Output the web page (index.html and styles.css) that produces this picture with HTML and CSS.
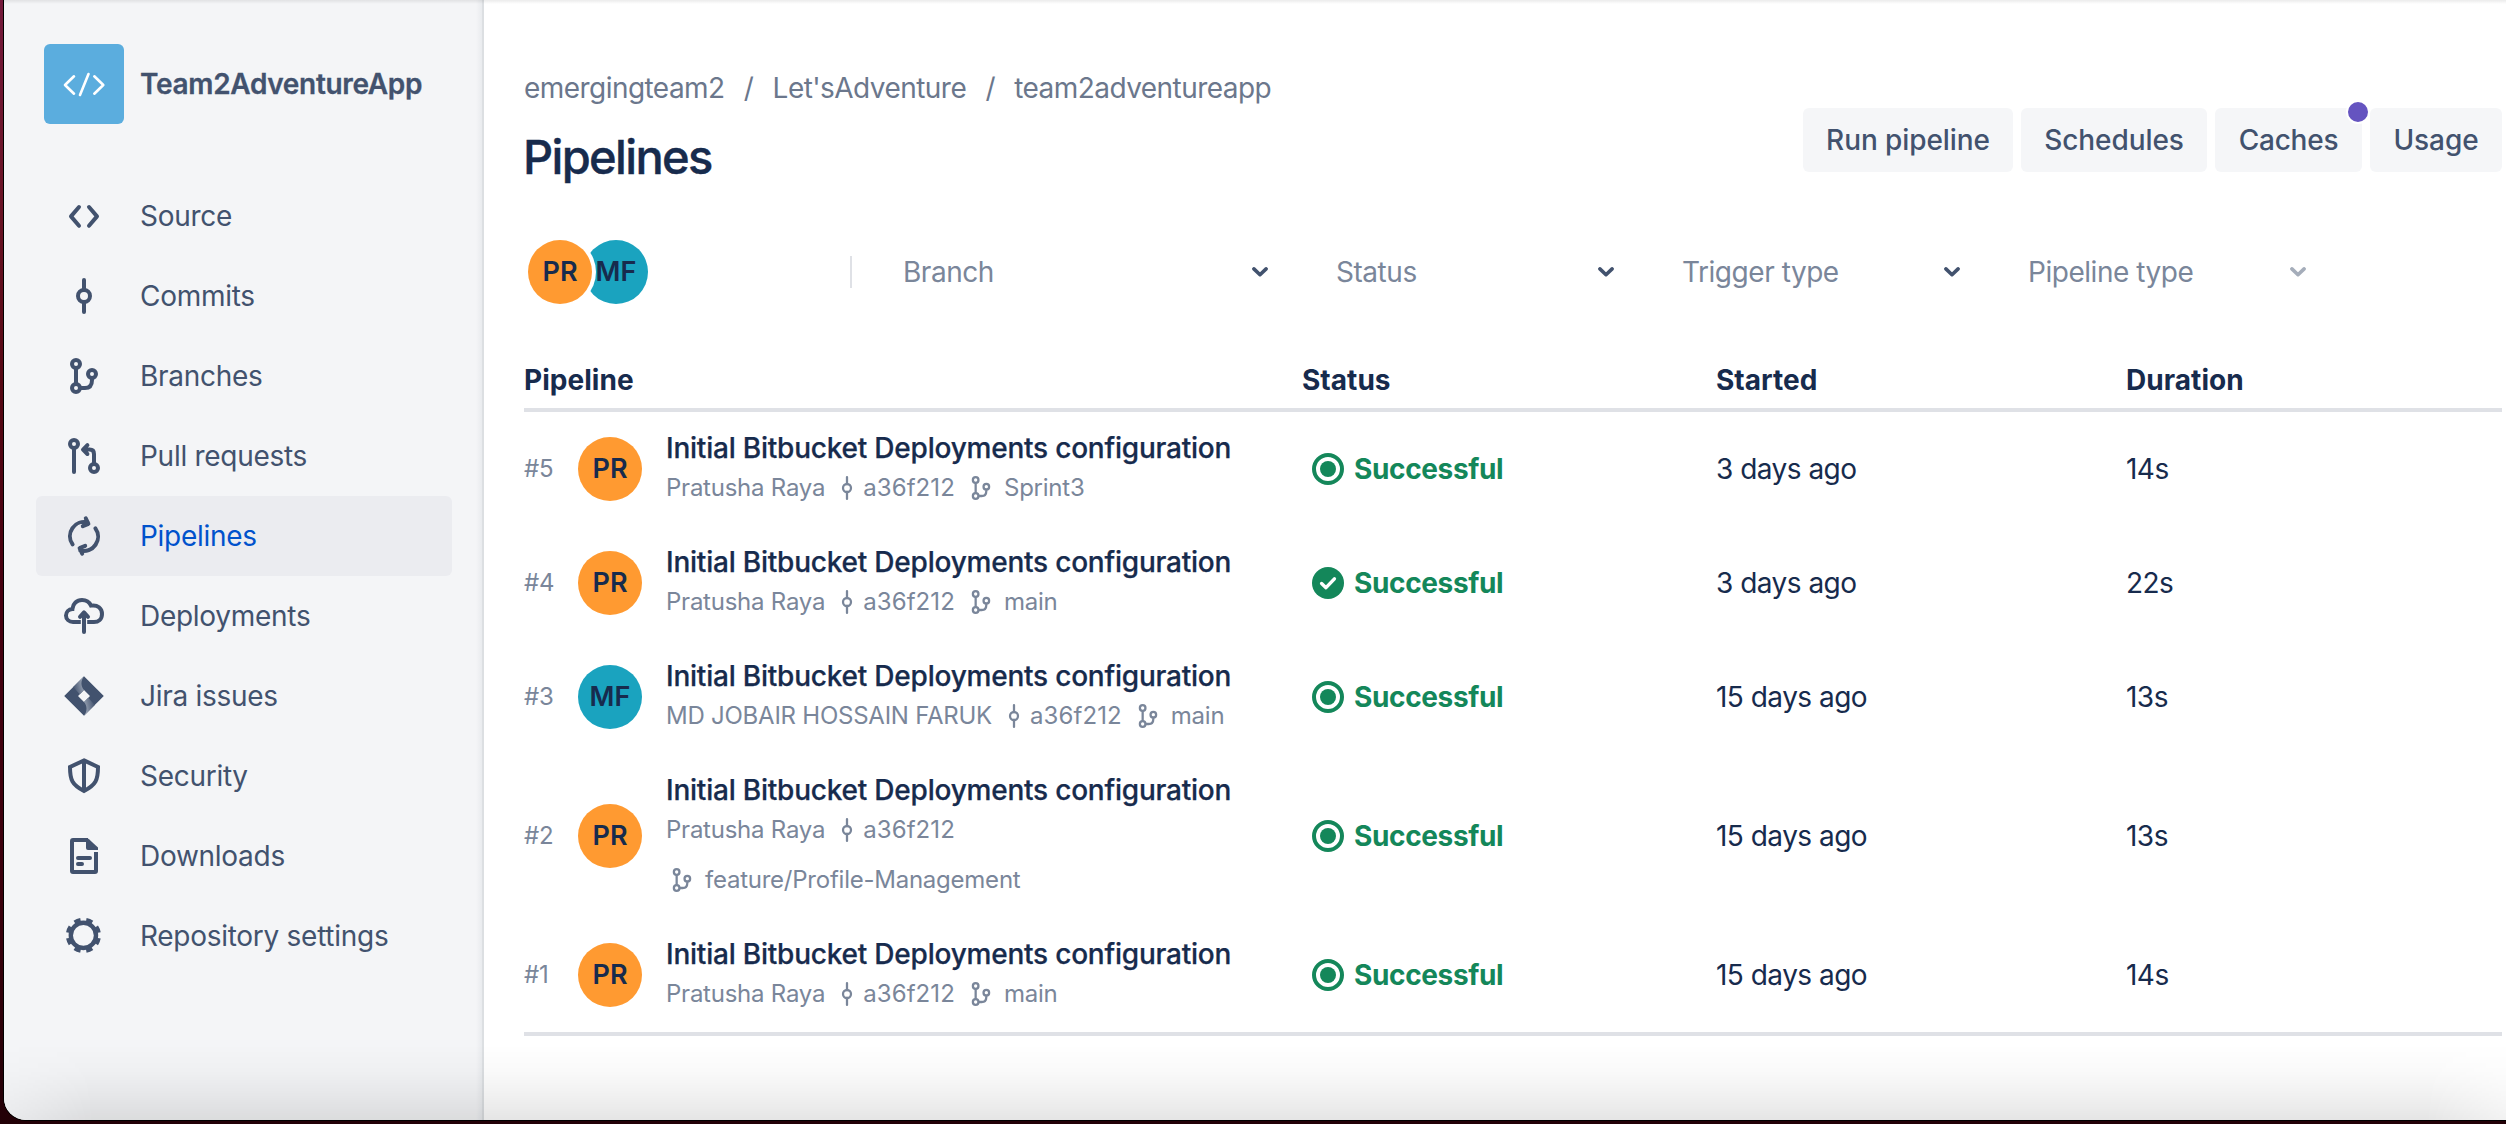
FILE: index.html
```
<!DOCTYPE html>
<html lang="en">
<head>
<meta charset="utf-8">
<title>Pipelines</title>
<link rel="stylesheet" href="styles.css">
</head>
<body>
<svg class="sprite" aria-hidden="true">
  <symbol id="commit" viewBox="0 0 24 24"><g fill="none" stroke="currentColor" stroke-width="2" stroke-linecap="round"><circle cx="12" cy="12" r="3"/><path d="M12 4v4.5M12 15.5V20"/></g></symbol>
  <symbol id="commit-small" viewBox="0 0 24 24"><g fill="none" stroke="currentColor" stroke-width="1.700" stroke-linecap="round"><circle cx="12" cy="12" r="3"/><path d="M12 3.800V9M12 15v5.200"/></g></symbol>
  <symbol id="branch" viewBox="0 0 24 24"><g fill="none" stroke="currentColor" stroke-width="2"><circle cx="8" cy="6" r="2"/><circle cx="8" cy="18" r="2"/><circle cx="16" cy="11" r="2"/><path d="M8 8v8M16 13v1c0 2.6-1.3 4-3.5 4H10"/></g></symbol>
  <symbol id="branch-small" viewBox="0 0 24 24"><g fill="none" stroke="currentColor" stroke-width="1.700"><circle cx="8" cy="6" r="2.100"/><circle cx="8" cy="18" r="2.100"/><circle cx="16" cy="11" r="2.100"/><path d="M8 8v8M16 13v1c0 2.6-1.3 4-3.5 4H10"/></g></symbol>
  <symbol id="chevron" viewBox="0 0 16 10"><path d="M1.900 1.900 8 7.700l6.100-5.800" fill="none" stroke="currentColor" stroke-width="3.600" stroke-linecap="round" stroke-linejoin="round"/></symbol>
  <symbol id="target" viewBox="0 0 32 32"><circle cx="16" cy="16" r="14" fill="none" stroke="currentColor" stroke-width="4"/><circle cx="16" cy="16" r="8" fill="currentColor"/></symbol>
  <symbol id="check" viewBox="0 0 32 32"><circle cx="16" cy="16" r="16" fill="currentColor"/><path d="m9.600 16.500 4.400 4.200 8.400-8.900" fill="none" stroke="#fff" stroke-width="3.400" stroke-linecap="round" stroke-linejoin="round"/></symbol>
</svg>

<div class="window">
  <aside class="sidebar">
    <div class="repo">
      <svg class="repo-logo" viewBox="0 0 80 80"><path d="M30 32.300 21 41l9 8.700M44.500 30 36 51M50.300 32.300l9 8.700-9 8.700" fill="none" stroke="#fff" stroke-width="2.600" stroke-linecap="round" stroke-linejoin="round"/></svg>
      <span class="repo-name">Team2AdventureApp</span>
    </div>
    <nav class="nav">
      <a class="nav-item"><svg class="nav-icon" viewBox="0 0 24 24"><path d="m9.500 7.500-4 4.700 4 4.700M14.500 7.500l4 4.700-4 4.700" fill="none" stroke="currentColor" stroke-width="2" stroke-linecap="round" stroke-linejoin="round"/></svg>Source</a>
      <a class="nav-item"><svg class="nav-icon"><use href="#commit"/></svg>Commits</a>
      <a class="nav-item"><svg class="nav-icon"><use href="#branch"/></svg>Branches</a>
      <a class="nav-item"><svg class="nav-icon" viewBox="0 0 24 24"><g fill="none" stroke="currentColor" stroke-width="2" stroke-linecap="round" stroke-linejoin="round"><circle cx="7" cy="6" r="2"/><circle cx="17" cy="18" r="2"/><path d="M7 8v12M17 16v-5c0-1.500-.8-2.200-2.200-2.200H12M13.700 6.600 11.500 8.800l2.200 2.200"/></g></svg>Pull requests</a>
      <a class="nav-item selected"><svg class="nav-icon" viewBox="0 0 24 24"><g fill="none" stroke="currentColor" stroke-width="2" stroke-linecap="round" stroke-linejoin="round"><path d="M6.300 16.200A7.100 7.100 0 0 1 13.900 5.200M12.900 3.200l1.300 2.700-2.800 1.200M17.700 8.200a7.100 7.100 0 0 1-7.600 11M11.100 20.800 9.800 18.100l2.800-1.200"/></g></svg>Pipelines</a>
      <a class="nav-item"><svg class="nav-icon" viewBox="0 0 24 24"><g fill="none" stroke="currentColor" stroke-width="2"><path d="M10.400 15H6.500C4.500 15 3 13.600 3 11.800S4.300 8.600 6.200 8.500C6.400 5.900 8.400 4 11 4c2 0 3.700 1.100 4.500 2.800C18.800 6.200 21 8.300 21 11s-1.800 4-4 4h-3.400"/><path d="M12 20V10.500M10 12.400l2-2.200 2 2.200" stroke-linecap="round" stroke-linejoin="round"/></g></svg>Deployments</a>
      <a class="nav-item"><svg class="nav-icon" viewBox="0 0 24 24"><defs><linearGradient id="fade" x1="1" y1=".3" x2="0" y2=".7"><stop offset=".1" stop-color="#98a2b3"/><stop offset="1" stop-color="#42526e"/></linearGradient></defs><path d="M12 2.100 21.900 12 12 21.900 2.100 12ZM12 9l-3 3 3 3 3-3Z" fill="currentColor" fill-rule="evenodd"/><path id="facet" d="M12 2.100C10.300 4.300 10.300 6.900 12 9L9.900 11.100 6.600 7.500Z" fill="url(#fade)"/><use href="#facet" transform="rotate(180 12 12)"/></svg>Jira issues</a>
      <a class="nav-item"><svg class="nav-icon" viewBox="0 0 24 24"><path d="m12 4.200 7 3.300C19 14 18 16.300 12 19.500 6 16.300 5 14 5 7.500ZM12 4.500V19" fill="none" stroke="currentColor" stroke-width="2"/></svg>Security</a>
      <a class="nav-item"><svg class="nav-icon" viewBox="0 0 24 24"><g fill="none" stroke="currentColor" stroke-width="2"><path d="M18 10v9.500a.5.500 0 0 1-.5.500h-11a.5.500 0 0 1-.5-.5v-15A.5.500 0 0 1 6.500 4H14"/><path d="M9 13h6M9 16h2" stroke-linecap="round"/></g><path d="M13 3c.6 0 1 .2 1.500.6L19 7.700V9h-5a1 1 0 0 1-1-1Z" fill="currentColor"/></svg>Downloads</a>
      <a class="nav-item"><svg class="nav-icon" viewBox="0 0 24 24"><g fill="none" stroke="currentColor"><circle cx="11.700" cy="11.700" r="6.300" stroke-width="2.200"/><circle cx="11.700" cy="11.700" r="7.700" stroke-width="2.200" pathLength="80" stroke-dasharray="5.200 4.800" stroke-dashoffset="-2.400"/></g></svg>Repository settings</a>
    </nav>
  </aside>

  <main class="main">
    <header class="page-header">
      <div>
        <div class="breadcrumbs"><span>emergingteam2</span><span class="slash">/</span><span>Let'sAdventure</span><span class="slash">/</span><span>team2adventureapp</span></div>
        <h1 class="title">Pipelines</h1>
      </div>
      <div class="actions">
        <button class="btn">Run pipeline</button>
        <button class="btn">Schedules</button>
        <button class="btn">Caches<i class="dot"></i></button>
        <button class="btn">Usage</button>
      </div>
    </header>

    <div class="filters">
      <div class="people"><span class="avatar pr first">PR</span><span class="avatar mf">MF</span></div>
      <div class="select branch-select"><span>Branch</span><svg class="chev"><use href="#chevron"/></svg></div>
      <div class="select"><span>Status</span><svg class="chev"><use href="#chevron"/></svg></div>
      <div class="select"><span>Trigger type</span><svg class="chev"><use href="#chevron"/></svg></div>
      <div class="select"><span>Pipeline type</span><svg class="chev muted"><use href="#chevron"/></svg></div>
    </div>

    <section class="table">
      <div class="row head"><span>Pipeline</span><span>Status</span><span>Started</span><span>Duration</span></div>
      <div class="row">
        <div class="run"><span class="num">#5</span><span class="avatar pr">PR</span><div class="info"><div class="name">Initial Bitbucket Deployments configuration</div><div class="meta"><span>Pratusha Raya</span><svg class="mi"><use href="#commit-small"/></svg><span class="hash">a36f212</span><svg class="mi br"><use href="#branch-small"/></svg><span>Sprint3</span></div></div></div>
        <div class="status"><svg class="si"><use href="#target"/></svg>Successful</div><span class="cell">3 days ago</span><span class="cell">14s</span>
      </div>
      <div class="row">
        <div class="run"><span class="num">#4</span><span class="avatar pr">PR</span><div class="info"><div class="name">Initial Bitbucket Deployments configuration</div><div class="meta"><span>Pratusha Raya</span><svg class="mi"><use href="#commit-small"/></svg><span class="hash">a36f212</span><svg class="mi br"><use href="#branch-small"/></svg><span>main</span></div></div></div>
        <div class="status"><svg class="si"><use href="#check"/></svg>Successful</div><span class="cell">3 days ago</span><span class="cell">22s</span>
      </div>
      <div class="row">
        <div class="run"><span class="num">#3</span><span class="avatar mf">MF</span><div class="info"><div class="name">Initial Bitbucket Deployments configuration</div><div class="meta"><span>MD JOBAIR HOSSAIN FARUK</span><svg class="mi"><use href="#commit-small"/></svg><span class="hash">a36f212</span><svg class="mi br"><use href="#branch-small"/></svg><span>main</span></div></div></div>
        <div class="status"><svg class="si"><use href="#target"/></svg>Successful</div><span class="cell">15 days ago</span><span class="cell">13s</span>
      </div>
      <div class="row">
        <div class="run"><span class="num">#2</span><span class="avatar pr">PR</span><div class="info"><div class="name">Initial Bitbucket Deployments configuration</div><div class="meta"><span>Pratusha Raya</span><svg class="mi"><use href="#commit-small"/></svg><span class="hash">a36f212</span></div><div class="meta wrapped"><svg class="mi br"><use href="#branch-small"/></svg><span>feature/Profile-Management</span></div></div></div>
        <div class="status"><svg class="si"><use href="#target"/></svg>Successful</div><span class="cell">15 days ago</span><span class="cell">13s</span>
      </div>
      <div class="row last">
        <div class="run"><span class="num">#1</span><span class="avatar pr">PR</span><div class="info"><div class="name">Initial Bitbucket Deployments configuration</div><div class="meta"><span>Pratusha Raya</span><svg class="mi"><use href="#commit-small"/></svg><span class="hash">a36f212</span><svg class="mi br"><use href="#branch-small"/></svg><span>main</span></div></div></div>
        <div class="status"><svg class="si"><use href="#target"/></svg>Successful</div><span class="cell">15 days ago</span><span class="cell">14s</span>
      </div>
    </section>
  </main>
</div>
</body>
</html>
```
FILE: styles.css
```
* { box-sizing: border-box; }

html, body { height: 100%; margin: 0; overflow: hidden; }

body {
  font-family: Inter, "Liberation Sans", sans-serif;
  font-size: 28px;
  line-height: 40px;
  color: #172b4d;
  background: linear-gradient(#741a3c 0, #6a1426 200px, #560814 380px, #450010 600px, #3a000c 900px, #220006 1124px);
}

.sprite { display: none; }

.window {
  position: relative;
  display: flex;
  height: 1120px;
  margin-left: 4px;
  background: #fff;
  border-bottom-left-radius: 22px;
  box-shadow: 0 0 0 1px #000;
  overflow: hidden;
}

/* soft shade along the bottom edge of the window */
.window::after {
  content: "";
  position: absolute;
  inset: auto 0 0 0;
  height: 76px;
  background: linear-gradient(transparent, rgba(0, 0, 0, .018) 35%, rgba(0, 0, 0, .06) 70%, rgba(0, 0, 0, .1));
  mask-image: linear-gradient(90deg, rgba(0, 0, 0, .4), #000 90px, #000 calc(100% - 80px), rgba(0, 0, 0, .5));
}

/* thin shade cast by the toolbar above */
.window::before {
  content: "";
  position: absolute;
  inset: 0 0 auto 0;
  height: 4px;
  background: linear-gradient(rgba(0, 0, 0, .08), transparent);
}

.sidebar {
  flex: 0 0 480px;
  padding: 44px 32px 0;
  color: #42526e;
  background: linear-gradient(90deg, transparent 472px, #e9ebee 478px, #dcdfe2 478px) #f4f5f7;
}

.repo { display: flex; align-items: center; height: 80px; padding-left: 8px; }
.repo-logo { width: 80px; height: 80px; border-radius: 6px; background: #5badde; }
.repo-name { margin-left: 16px; font-weight: 600; letter-spacing: -.32px; -webkit-text-stroke: .3px; }

.nav { margin-top: 52px; }
.nav-item { display: flex; align-items: center; height: 80px; padding-left: 24px; border-radius: 6px; letter-spacing: -.28px; }
.nav-icon { width: 48px; height: 48px; margin-right: 32px; color: #42526e; }
.nav-item.selected { background: #ebecf0; color: #0052cc; }

.main { flex: 1; padding: 68px 4px 0 40px; }

.page-header { display: flex; justify-content: space-between; height: 156px; }
.breadcrumbs { display: flex; color: #6b778c; letter-spacing: -.55px; }
.slash { width: 48px; text-align: center; }
.title { margin: 19px 0 0 -1px; font-size: 47px; line-height: 60px; font-weight: 500; letter-spacing: -1.65px; -webkit-text-stroke: .4px; }

.actions { display: flex; gap: 8px; margin-top: 40px; }
.btn {
  position: relative;
  height: 64px;
  padding: 0;
  border: 0;
  border-radius: 6px;
  font: inherit;
  font-weight: 500;
  letter-spacing: -.08px;
  white-space: nowrap;
  color: #42526e;
  background: #f5f6f8;
}
.btn:first-child { width: 210px; }
.btn:nth-child(2) { width: 186px; }
.btn:nth-child(3) { width: 147px; letter-spacing: -.25px; }
.btn:last-child { width: 132px; }
.dot { position: absolute; top: -8px; right: -8px; width: 24px; height: 24px; border: 2px solid #fff; border-radius: 50%; background: #6554c0; }

.filters { display: flex; align-items: center; height: 96px; color: #7a869a; }
.people { display: flex; width: 326px; padding-left: 4px; }
.avatar {
  flex: none;
  width: 64px;
  height: 64px;
  border-radius: 50%;
  line-height: 64px;
  text-align: center;
  font-weight: 600;
  font-size: 27px;
  color: #172b4d;
}
.pr { background: #ff9a31; }
.mf { background: #1aa3bf; }
.first { position: relative; margin-right: -8px; box-shadow: 0 0 0 4px #fff; }
.select { display: flex; align-items: center; justify-content: space-between; width: 278px; margin-right: 68px; letter-spacing: -.46px; }
.branch-select { width: 418px; padding-left: 53px; background: linear-gradient(#dfe1e6, #dfe1e6) 0 4px / 2px 32px no-repeat; }
.chev { width: 16px; height: 10px; color: #42526e; }
.chev.muted { color: #a5adba; }

.table { margin-top: 32px; }
.row { display: grid; grid-template-columns: 778px 414px 410px 1fr; align-items: center; }
.head { height: 60px; border-bottom: 4px solid #dfe1e6; font-weight: 700; letter-spacing: .04px; }
.last { border-bottom: 4px solid #dfe1e6; }

.run { display: flex; align-items: center; }
.num { width: 54px; color: #7a869a; font-size: 24px; letter-spacing: -.3px; }
.info { padding: 16px 0 18px 24px; }
.name { font-weight: 500; letter-spacing: -.22px; -webkit-text-stroke: .25px; }
.meta { display: flex; align-items: center; height: 40px; font-size: 24px; letter-spacing: -.24px; color: #7a869a; white-space: pre; }
.meta.wrapped { height: 50px; padding-top: 10px; }
.mi { width: 32px; height: 32px; margin-left: 6px; }
.mi.br { margin-left: 10px; margin-right: 7px; }
.wrapped .mi.br { margin-left: 0; }
.hash { letter-spacing: .1px; }

.status { display: flex; align-items: center; padding-left: 10px; font-weight: 700; letter-spacing: -.36px; color: #14875a; }
.si { width: 32px; height: 32px; margin-right: 10px; }
.cell { letter-spacing: -.52px; }
```
